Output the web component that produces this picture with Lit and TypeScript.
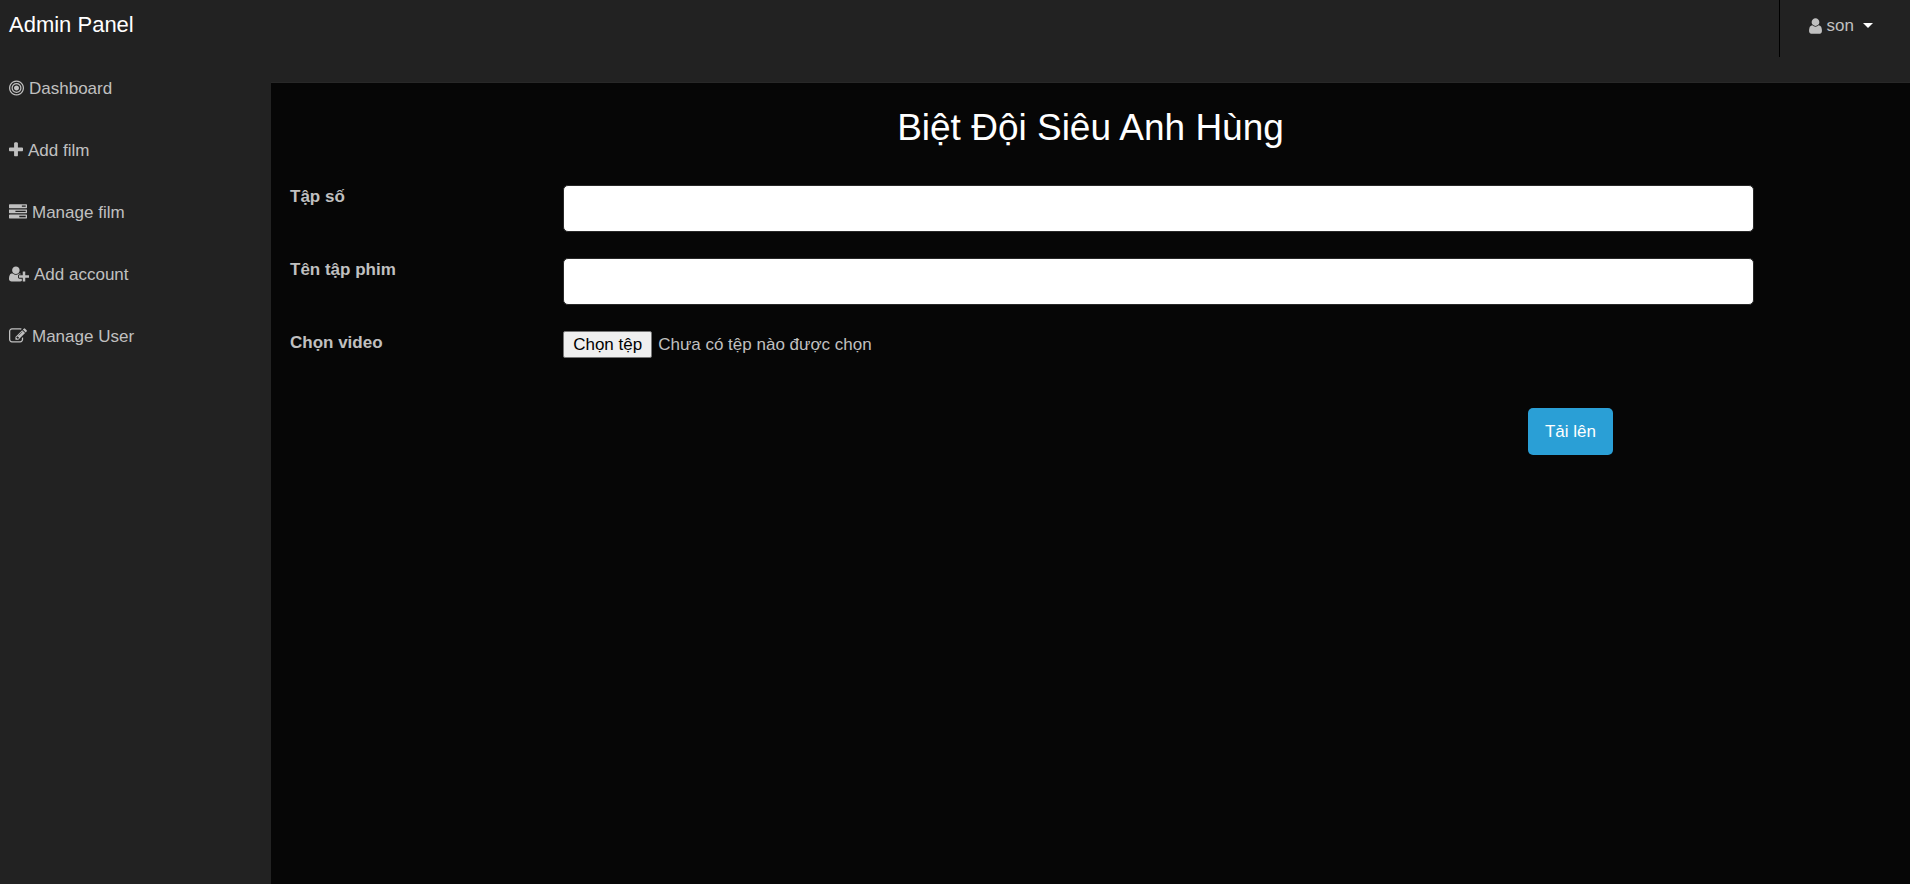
import { LitElement, html, css, svg } from "lit";
import { customElement, state } from "lit/decorators.js";

interface Icon {
  box: string;
  width: number;
  path: string;
}

// Each box is cropped to the glyph's own advance; 1792 units are one em.
const icons: Record<string, Icon> = {
  bullseye: {
    box: "128 0 1536 1792",
    width: 15,
    path: "M1152 896q0 106-75 181t-181 75-181-75-75-181 75-181 181-75 181 75 75 181zm128 0q0-159-112.5-271.5t-271.5-112.5-271.5 112.5-112.5 271.5 112.5 271.5 271.5 112.5 271.5-112.5 112.5-271.5zm128 0q0 212-150 362t-362 150-362-150-150-362 150-362 362-150 362 150 150 362zm128 0q0-130-51-248.5t-136.5-204-204-136.5-248.5-51-248.5 51-204 136.5-136.5 204-51 248.5 51 248.5 136.5 204 204 136.5 248.5 51 248.5-51 204-136.5 136.5-204 51-248.5zm128 0q0 209-103 385.5t-279.5 279.5-385.5 103-385.5-103-279.5-279.5-103-385.5 103-385.5 279.5-279.5 385.5-103 385.5 103 279.5 279.5 103 385.5z",
  },
  plus: {
    box: "192 0 1408 1792",
    width: 14,
    path: "M1600 736v192q0 40-28 68t-68 28h-416v416q0 40-28 68t-68 28h-192q-40 0-68-28t-28-68v-416h-416q-40 0-68-28t-28-68v-192q0-40 28-68t68-28h416v-416q0-40 28-68t68-28h192q40 0 68 28t28 68v416h416q40 0 68 28t28 68z",
  },
  tasks: {
    box: "0 0 1792 1792",
    width: 18,
    path: "M1024 1408h640v-128h-640v128zm-384-512h1024v-128h-1024v128zm640-512h384v-128h-384v128zm512 832v256q0 26-19 45t-45 19h-1664q-26 0-45-19t-19-45v-256q0-26 19-45t45-19h1664q26 0 45 19t19 45zm0-512v256q0 26-19 45t-45 19h-1664q-26 0-45-19t-19-45v-256q0-26 19-45t45-19h1664q26 0 45 19t19 45zm0-512v256q0 26-19 45t-45 19h-1664q-26 0-45-19t-19-45v-256q0-26 19-45t45-19h1664q26 0 45 19t19 45z",
  },
  userPlus: {
    box: "0 0 2048 1792",
    width: 20,
    path: "M704 896q-159 0-271.5-112.5t-112.5-271.5 112.5-271.5 271.5-112.5 271.5 112.5 112.5 271.5-112.5 271.5-271.5 112.5zm960 128h352q13 0 22.5 9.5t9.5 22.5v192q0 13-9.5 22.5t-22.5 9.5h-352v352q0 13-9.5 22.5t-22.5 9.5h-192q-13 0-22.5-9.5t-9.5-22.5v-352h-352q-13 0-22.5-9.5t-9.5-22.5v-192q0-13 9.5-22.5t22.5-9.5h352v-352q0-13 9.5-22.5t22.5-9.5h192q13 0 22.5 9.5t9.5 22.5v352zm-736 224q0 52 38 90t90 38h256v238q-68 50-171 50h-874q-121 0-194-69t-73-190q0-53 3.5-103.5t14-109 26.5-108.5 43-97.5 62-81 85.5-53.5 111.5-20q19 0 39 17 79 61 154.5 91.5t164.5 30.5 164.5-30.5 154.5-91.5q20-17 39-17 132 0 217 96h-223q-52 0-90 38t-38 90v192z",
  },
  edit: {
    box: "0 0 1792 1792",
    width: 18,
    path: "M888 1184l116-116-152-152-116 116v56h96v96h56zm440-720q-16-16-33 1l-350 350q-17 17-1 33t33-1l350-350q17-17 1-33zm80 594v190q0 119-84.5 203.5t-203.5 84.5h-832q-119 0-203.5-84.5t-84.5-203.5v-832q0-119 84.5-203.5t203.5-84.5h832q63 0 117 25 15 7 18 23 3 17-9 29l-49 49q-14 14-32 8-23-6-45-6h-832q-66 0-113 47t-47 113v832q0 66 47 113t113 47h832q66 0 113-47t47-113v-126q0-13 9-22l64-64q15-15 35-7t20 29zm-96-738l288 288-672 672h-288v-288zm444 132l-92 92-288-288 92-92q28-28 68-28t68 28l152 152q28 28 28 68t-28 68z",
  },
  user: {
    box: "256 0 1280 1792",
    width: 13,
    path: "M1536 1399q0 109-62.5 187t-150.5 78h-854q-88 0-150.5-78t-62.5-187q0-85 8.5-160.5t31.5-152 58.5-131 94-89 134.5-34.5q131 128 313 128t313-128q76 0 134.5 34.5t94 89 58.5 131 31.5 152 8.5 160.5zm-256-887q0 159-112.5 271.5t-271.5 112.5-271.5-112.5-112.5-271.5 112.5-271.5 271.5-112.5 271.5 112.5 112.5 271.5z",
  },
};

const icon = (name: string) => {
  const { box, width, path } = icons[name];
  return html`<svg class="icon" width=${width} height="18" viewBox=${box} aria-hidden="true">
    ${svg`<path d=${path}></path>`}
  </svg>`;
};

const links = [
  { icon: "bullseye", text: "Dashboard" },
  { icon: "plus", text: "Add film" },
  { icon: "tasks", text: "Manage film" },
  { icon: "userPlus", text: "Add account" },
  { icon: "edit", text: "Manage User" },
];

@customElement("app-root")
export class AppRoot extends LitElement {
  @state() private fileName = "Chưa có tệp nào được chọn";

  static styles = css`
    :host {
      display: flex;
      flex-direction: column;
      min-height: 100vh;
      background: #222;
      color: #c0c0c0;
      font-family: "Liberation Sans", Arial, sans-serif;
      font-size: 17px;
      line-height: 25px;
    }
    *,
    *::before {
      box-sizing: border-box;
    }
    a {
      color: inherit;
      text-decoration: none;
    }
    .icon {
      fill: currentColor;
      flex: none;
    }
    .topbar {
      display: flex;
      justify-content: space-between;
      align-items: flex-start;
      height: 57px;
    }
    .brand {
      padding: 12px 9px;
      font-size: 22px;
      color: #fff;
    }
    .account {
      display: flex;
      align-items: center;
      gap: 5px;
      height: 57px;
      padding: 0 37px 6px 29px;
      border: 0;
      border-left: 1px solid #000;
      background: none;
      color: inherit;
      font: inherit;
    }
    .caret {
      margin-left: 4px;
      border: 5px solid transparent;
      border-top-color: #fff;
      border-bottom: 0;
    }
    .body {
      display: flex;
      flex: 1;
    }
    .sidebar {
      flex: 0 0 271px;
    }
    .menu {
      margin: 0;
      padding: 0;
      list-style: none;
    }
    .link {
      display: flex;
      align-items: center;
      gap: 5px;
      height: 62px;
      padding: 0 9px;
    }
    .main {
      flex: 1;
      margin-top: 25px;
      padding: 19px 0;
      border-top: 1px solid #282828;
      background: #060606;
    }
    .title {
      margin: 0 0 32px;
      padding: 5px 19px;
      font-size: 37px;
      line-height: 41px;
      font-weight: 400;
      text-align: center;
      color: #fff;
    }
    .row {
      display: grid;
      grid-template-columns: 2fr 9fr 1fr;
      margin-bottom: 26px;
    }
    .label {
      padding: 0 19px;
      font-weight: 700;
      line-height: 24px;
    }
    .cell {
      padding: 0 19px;
    }
    .field {
      display: block;
      width: 100%;
      height: 47px;
      padding: 10px 15px;
      border: 1px solid #282828;
      border-radius: 5px;
      background: #fff;
      color: #888;
      font: inherit;
    }
    .file {
      display: flex;
      align-items: center;
      gap: 6px;
      position: relative;
    }
    .file-input {
      position: absolute;
      inset: 0;
      width: 100%;
      opacity: 0;
    }
    .file-button {
      padding: 0 9px;
      border: 1px solid #767676;
      border-radius: 2px;
      background: #efefef;
      color: #000;
    }
    .actions {
      display: flex;
      justify-content: flex-end;
      padding: 24px 297px 0 19px;
    }
    .upload {
      height: 47px;
      padding: 0 17px;
      border: 0;
      border-radius: 5px;
      background: #2a9fd6;
      color: #fff;
      font: inherit;
    }
  `;

  private pick(e: Event) {
    const file = (e.target as HTMLInputElement).files?.[0];
    this.fileName = file ? file.name : "Chưa có tệp nào được chọn";
  }

  render() {
    return html`
      <header class="topbar">
        <a class="brand" href="#">Admin Panel</a>
        <button class="account" type="button">
          ${icon("user")}<span>son</span><span class="caret"></span>
        </button>
      </header>
      <div class="body">
        <nav class="sidebar">
          <ul class="menu">
            ${links.map(
              (l) => html`<li>
                <a class="link" href="#">${icon(l.icon)}<span>${l.text}</span></a>
              </li>`
            )}
          </ul>
        </nav>
        <main class="main">
          <h1 class="title">Biệt Đội Siêu Anh Hùng</h1>
          <form @submit=${(e: Event) => e.preventDefault()}>
            <div class="row">
              <label class="label" for="number">Tập số</label>
              <div class="cell"><input class="field" id="number" type="text" /></div>
            </div>
            <div class="row">
              <label class="label" for="name">Tên tập phim</label>
              <div class="cell"><input class="field" id="name" type="text" /></div>
            </div>
            <div class="row">
              <label class="label" for="video">Chọn video</label>
              <div class="cell">
                <div class="file">
                  <span class="file-button">Chọn tệp</span>
                  <span>${this.fileName}</span>
                  <input class="file-input" id="video" type="file" @change=${this.pick} />
                </div>
              </div>
            </div>
            <div class="actions">
              <button class="upload" type="submit">Tải lên</button>
            </div>
          </form>
        </main>
      </div>
    `;
  }
}
